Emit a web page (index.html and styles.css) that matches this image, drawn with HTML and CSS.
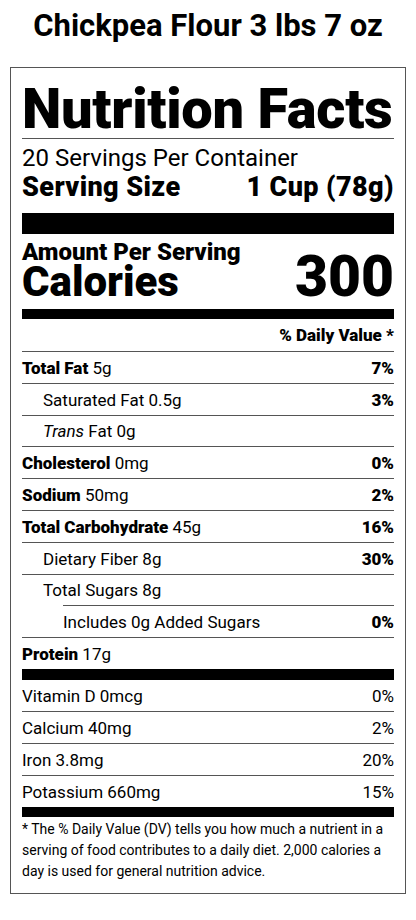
FILE: index.html
```html
<!DOCTYPE html>
<html>
<head>
<meta charset="utf-8">
<link rel="stylesheet" href="styles.css">
</head>
<body>
<h1 class="title">Chickpea Flour 3 lbs 7 oz</h1>
<section class="label">
  <h2 class="nf-head">Nutrition Facts</h2>
  <div class="servings">20 Servings Per Container</div>
  <div class="serving-size"><span>Serving Size</span><span>1 Cup (78g)</span></div>
  <div class="bar bar-thick"></div>
  <div class="cal-block">
    <div class="cal-left">
      <div class="amount">Amount Per Serving</div>
      <div class="calories">Calories</div>
    </div>
    <div class="cal-num">300</div>
  </div>
  <div class="bar bar-mid"></div>
  <div class="dv-head">% Daily Value *</div>
  <div class="row"><span><b>Total Fat</b> 5g</span><b>7%</b></div>
  <div class="row indent1"><span>Saturated Fat 0.5g</span><b>3%</b></div>
  <div class="row indent1"><span><i>Trans</i> Fat 0g</span></div>
  <div class="row"><span><b>Cholesterol</b> 0mg</span><b>0%</b></div>
  <div class="row"><span><b>Sodium</b> 50mg</span><b>2%</b></div>
  <div class="row"><span><b>Total Carbohydrate</b> 45g</span><b>16%</b></div>
  <div class="row indent1"><span>Dietary Fiber 8g</span><b>30%</b></div>
  <div class="row indent1"><span>Total Sugars 8g</span></div>
  <div class="row partial"><span>Includes 0g Added Sugars</span><b>0%</b></div>
  <div class="row"><span><b>Protein</b> 17g</span></div>
  <div class="bar bar-protein"></div>
  <div class="row vit first"><span>Vitamin D 0mcg</span><span>0%</span></div>
  <div class="row vit"><span>Calcium 40mg</span><span>2%</span></div>
  <div class="row vit"><span>Iron 3.8mg</span><span>20%</span></div>
  <div class="row vit"><span>Potassium 660mg</span><span>15%</span></div>
  <div class="bar bar-mid"></div>
  <p class="footnote">* The % Daily Value (DV) tells you how much a nutrient in a serving of food contributes to a daily diet. 2,000 calories a day is used for general nutrition advice.</p>
</section>
</body>
</html>
```

FILE: styles.css
```css
* { box-sizing: border-box; }
html, body { margin: 0; padding: 0; background: #fff; }
body {
  font-family: Roboto, "Liberation Sans", sans-serif;
  color: #000;
  width: 416px;
}
.title {
  margin: 9px 0 0;
  font-size: 31px;
  line-height: 34px;
  font-weight: 700;
  text-align: center;
}
.label {
  margin: 24px 0 0 10px;
  width: 396px;
  border: 1px solid #555;
  padding: 16px 11px 11px;
}
.nf-head {
  margin: 0;
  font-size: 56px;
  line-height: 50px;
  font-weight: 900;
  letter-spacing: -0.3px;
  padding-bottom: 4px;
  border-bottom: 1px solid #555;
}
.servings {
  font-size: 24px;
  line-height: 26px;
  margin-top: 6px;
}
.serving-size {
  display: flex;
  justify-content: space-between;
  font-size: 27px;
  line-height: 28px;
  font-weight: 900;
  letter-spacing: 0.4px;
  margin-top: 2px;
}
.bar { background: #000; }
.bar-thick { height: 21px; margin-top: 12px; }
.bar-mid { height: 10px; }
.bar-protein { height: 11px; }
.cal-block {
  display: flex;
  justify-content: space-between;
  align-items: flex-end;
  padding: 6px 0 9px;
}
.amount {
  font-size: 24px;
  line-height: 24px;
  font-weight: 900;
}
.calories {
  font-size: 42px;
  line-height: 36px;
  font-weight: 900;
}
.cal-num {
  font-size: 57px;
  line-height: 47px;
  font-weight: 900;
}
.dv-head {
  text-align: right;
  font-size: 17px;
  font-weight: 900;
  line-height: 31px;
  height: 32px;
  padding-top: 1px;
}
.row {
  display: flex;
  justify-content: space-between;
  align-items: center;
  height: 31.8px;
  border-top: 1px solid #555;
  font-size: 17px;
  padding-top: 1px;
}
.row b { font-weight: 900; }
.indent1 { padding-left: 21px; }
.partial { margin-left: 41px; }
.vit.first { border-top: none; height: 31px; }
.vit { height: 32px; }
.footnote {
  margin: 0;
  font-size: 14px;
  line-height: 21px;
  padding-top: 2px;
}
```
